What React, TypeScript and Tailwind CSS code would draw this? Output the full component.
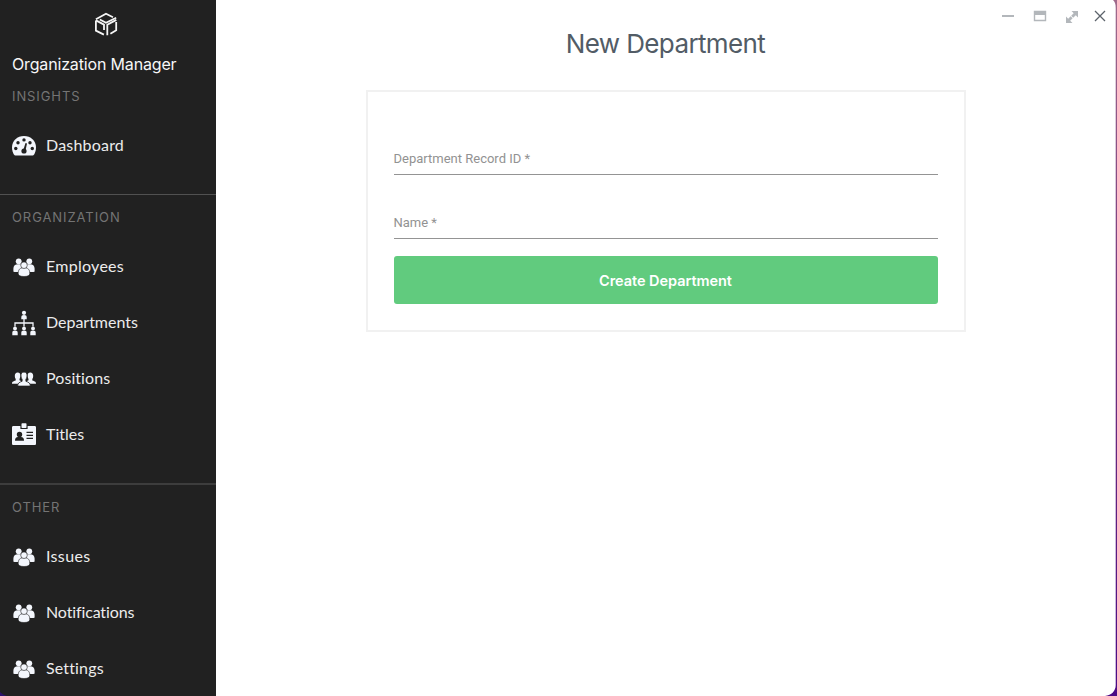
import React from "react";

const GroupIcon = () => (
  <svg width="24" height="24" viewBox="0 0 24 24" fill="#f3f6fc">
    <circle cx="6.7" cy="6.3" r="2.9" />
    <circle cx="17.3" cy="6.3" r="2.9" />
    <path d="M1.4 16.6v-3.2c0-2.6 1.8-4.2 4.6-4.2h3l1 7.7H2.6c-.8 0-1.2-.1-1.2-.3zM22.6 16.6v-3.2c0-2.6-1.8-4.2-4.6-4.2h-3l-1 7.7h7.4c.8 0 1.2-.1 1.2-.3z" />
    <g stroke="#212121" strokeWidth=".6">
      <path d="M6.2 18.6c0-4.1 1.6-5.9 5.8-5.9s5.8 1.8 5.8 5.9c0 2-2.4 2.9-5.8 2.9s-5.8-.9-5.8-2.9z" />
      <circle cx="12" cy="10.2" r="3.3" />
    </g>
  </svg>
);

const GaugeIcon = () => (
  <svg width="24" height="24" viewBox="0 0 24 24">
    <path d="M0 13.5C0 6.7 5.4 2 12 2s12 4.7 12 11.5c0 2.7-.8 5-1.9 7.1-.4.7-.9.9-1.5.9H3.4c-.6 0-1.1-.2-1.5-.9C.8 18.5 0 16.2 0 13.5z" fill="#f3f6fc" />
    <g fill="#212121">
      <circle cx="3.8" cy="14.5" r="1.7" />
      <circle cx="6" cy="8.7" r="1.7" />
      <circle cx="12" cy="5.9" r="1.7" />
      <circle cx="18" cy="8.7" r="1.7" />
      <circle cx="20.3" cy="14.5" r="1.7" />
      <circle cx="12" cy="17" r="2.6" />
      <path d="M11.2 16.5l2.3-7.500 1.500.4-1.600 7.600z" />
    </g>
  </svg>
);

const TreeIcon = () => (
  <svg width="24" height="26" viewBox="0 -1 24 26" fill="#f3f6fc">
    <circle cx="12" cy="1.8" r="2.1" />
    <path d="M9.3 8.200V6.400c0-1.600.8-2.400 2.700-2.400s2.700.8 2.700 2.400v1.800z" />
    <path d="M3 15.500v-3.500h18v3.500M12 8v7.500" fill="none" stroke="#f3f6fc" strokeWidth="1.300" />
    <circle cx="3" cy="17.400" r="1.900" />
    <circle cx="12" cy="17.400" r="1.900" />
    <circle cx="21" cy="17.400" r="1.900" />
    <path d="M.3 24.200v-2.400c0-1.500.8-2.200 2.700-2.200s2.700.7 2.700 2.200v2.400zM9.300 24.200v-2.400c0-1.500.8-2.200 2.700-2.200s2.700.7 2.700 2.200v2.400zM18.300 24.200v-2.400c0-1.500.8-2.200 2.700-2.200s2.700.7 2.700 2.200v2.400z" />
  </svg>
);

const CrowdIcon = () => (
  <svg width="24" height="24" viewBox="0 0 24 24" fill="#f3f6fc">
    <path d="M5.700 5.500c2 0 2.900 1.500 2.700 3.500-.1 1.600-.6 2.300-.9 3v1.300l2 1-2.700 2.500H0c0-1.800.6-2.200 3.700-3.200V12c-.6-.8-.9-1.700-.9-3 0-2.100 1-3.500 2.900-3.500zM18.300 5.500c-2 0-2.900 1.500-2.700 3.500.1 1.600.6 2.300.9 3v1.300l-2 1 2.700 2.500H24c0-1.800-.6-2.200-3.700-3.200V12c.6-.8.9-1.700.9-3 0-2.100-1-3.500-2.900-3.500z" />
    <path d="M12 5.100c2.100 0 3.200 1.500 3 3.800-.1 1.600-.5 2.500-1.100 3.300v2.100c2.900 1 4.400 1.700 4.400 4.800H5.700c0-3.100 1.500-3.800 4.400-4.800v-2.100c-.6-.8-1-1.700-1.100-3.300-.2-2.300.9-3.800 3-3.800z" stroke="#212121" strokeWidth=".8" />
  </svg>
);

const BadgeIcon = () => (
  <svg width="24" height="24" viewBox="0 0 24 24">
    <path d="M1.500 3h6.900v3h7.200V3h6.900c1 0 1.500.5 1.500 1.500v15.900c0 1-.5 1.500-1.500 1.500h-21C.5 21.900 0 21.400 0 20.400V4.500C0 3.500.5 3 1.500 3z" fill="#f3f6fc" />
    <rect x="9.500" y=".2" width="5" height="4.800" rx=".8" fill="#f3f6fc" />
    <g fill="#212121">
      <circle cx="7.500" cy="11.500" r="2.700" />
      <path d="M3 17.800c0-2.400 1-3.700 3-3.700h3c2 0 3 1.300 3 3.700zM14.500 8.700H21v1.300h-6.500zM14.500 11.700H21V13h-6.500zM14.500 14.700H21V16h-6.500z" />
    </g>
  </svg>
);

const Logo = () => (
  <svg width="24" height="26" viewBox="0 0 24 26" fill="none" stroke="#f5f5f5" strokeWidth="1.800">
    <path d="M1.900 8.300 12 2.800l7 3.400" />
    <path d="M5.800 8.500 12 11.800l10.200-5" />
    <path d="M1.900 9.400 10 13.600v5.400" />
    <path d="M1.900 9.400v10.200l8 4" />
    <path d="M22.300 8.900 13.300 13.800v10.400" />
    <path d="M22.200 11v8.300l-5.800 3.400" />
  </svg>
);

type Entry = { name: string; icon: React.ReactNode; tracking: string };

const SectionLabel = ({ children, tracking }: { children: React.ReactNode; tracking: string }) => (
  <h2 className={"flex h-8 shrink-0 items-center pt-0.5 pl-3 text-[13px] text-[#747474] " + tracking}>{children}</h2>
);

const NavList = ({ entries }: { entries: Entry[] }) => (
  <ul className="shrink-0 pt-1.5">
    {entries.map((e) => (
      <li key={e.name} className="flex h-14 items-center gap-[10px] pl-3">
        {e.icon}
        <span className={"pb-[3px] font-['Lato',sans-serif] text-[16px] text-[#ececec] " + e.tracking}>{e.name}</span>
      </li>
    ))}
  </ul>
);

const Field = ({ label }: { label: string }) => (
  <div className="h-[33px] border-b border-[#949494] pt-[7px] font-['Roboto',sans-serif] text-[13px] leading-5 text-[#929292]">
    {label}
  </div>
);

export default function App() {
  return (
    <div className="relative flex h-[696px] w-full overflow-hidden bg-white font-['Inter',sans-serif]">
      <aside className="flex w-[216px] shrink-0 flex-col overflow-hidden bg-[#212121]">
        <div className="flex h-12 w-[212px] shrink-0 items-center justify-center">
          <Logo />
        </div>
        <h1 className="flex h-8 shrink-0 items-center pl-3 text-[16px] tracking-[-0.16px] whitespace-nowrap text-[#f7f7f7]">Organization Manager</h1>
        <SectionLabel tracking="tracking-[0.9px]">INSIGHTS</SectionLabel>
        <NavList entries={[{ name: "Dashboard", icon: <GaugeIcon />, tracking: "tracking-[0.2px]" }]} />
        <section className="mt-5 shrink-0 border-t border-[#515151] pt-[6px]">
          <SectionLabel tracking="tracking-[0.92px]">ORGANIZATION</SectionLabel>
          <NavList
            entries={[
              { name: "Employees", icon: <GroupIcon />, tracking: "tracking-[0.27px]" },
              { name: "Departments", icon: <TreeIcon />, tracking: "tracking-[-0.02px]" },
              { name: "Positions", icon: <CrowdIcon />, tracking: "tracking-[0.07px]" },
              { name: "Titles", icon: <BadgeIcon />, tracking: "tracking-[0px]" },
            ]}
          />
        </section>
        <section className="mt-5 shrink-0 border-t-2 border-[#3d3d3d] pt-[6px]">
          <SectionLabel tracking="tracking-[0.9px]">OTHER</SectionLabel>
          <NavList
            entries={[
              { name: "Issues", icon: <GroupIcon />, tracking: "tracking-[0.35px]" },
              { name: "Notifications", icon: <GroupIcon />, tracking: "tracking-[-0.13px]" },
              { name: "Settings", icon: <GroupIcon />, tracking: "tracking-[0.15px]" },
            ]}
          />
        </section>
      </aside>

      <main className="flex flex-1 flex-col items-center pt-6 pr-[2px]">
        <h1 className="pt-px text-[26px] leading-[38px] tracking-[-0.62px] text-[#525c66]">New Department</h1>
        <form className="mt-[27px] h-[242px] w-[600px] border-2 border-[#f1f1f1] px-[26px] pt-[50px]">
          <Field label="Department Record ID *" />
          <div className="h-[31px]" />
          <Field label="Name *" />
          <button type="button" className="mt-[17px] flex h-12 w-full items-center justify-center rounded-[3px] bg-[#61cb7e] pt-px text-[14.5px] font-semibold tracking-[-0.05px] text-white">
            Create Department
          </button>
        </form>
      </main>

      <div className="absolute top-0 right-0 flex h-8 items-center pr-[11px]">
        <svg width="106" height="32" viewBox="0 0 106 32" fill="none">
          <path d="M2 16h12" stroke="#b3b7bb" strokeWidth="2" />
          <path d="M34.5 11.5h11v9h-11z" stroke="#b3b7bb" strokeWidth="1.4" />
          <path d="M34 11h12v4H34z" fill="#b3b7bb" />
          <path d="M71.500 11H78v6.500l-2.200-2.200-2.600 2.500-2-2 2.500-2.600zM66 16.500l2.200 2.200 2.400-2.400 2 2-2.400 2.400 2.300 2.300H66z" fill="#b3b7bb" />
          <path d="M95 11l10 10M105 11 95 21" stroke="#5c636b" strokeWidth="1.300" />
        </svg>
      </div>

      <svg className="absolute top-0 right-0" width="12" height="696" viewBox="0 0 12 696">
        <defs>
          <linearGradient id="edge" x1="0" y1="0" x2="0" y2="1">
            <stop offset="0" stopColor="#a06a8c" />
            <stop offset=".5" stopColor="#70307c" />
            <stop offset="1" stopColor="#4a0b86" />
          </linearGradient>
        </defs>
        <path d="M8 0c2 2 2.700 4 2.700 8v677c0 6-4 10-10.700 11h12V0z" fill="url(#edge)" />
      </svg>
      <svg className="absolute bottom-0 left-0" width="7" height="5" viewBox="0 0 7 5">
        <path d="M0 1c2 2 4 3 7 4H0z" fill="#2b126b" />
      </svg>
    </div>
  );
}
